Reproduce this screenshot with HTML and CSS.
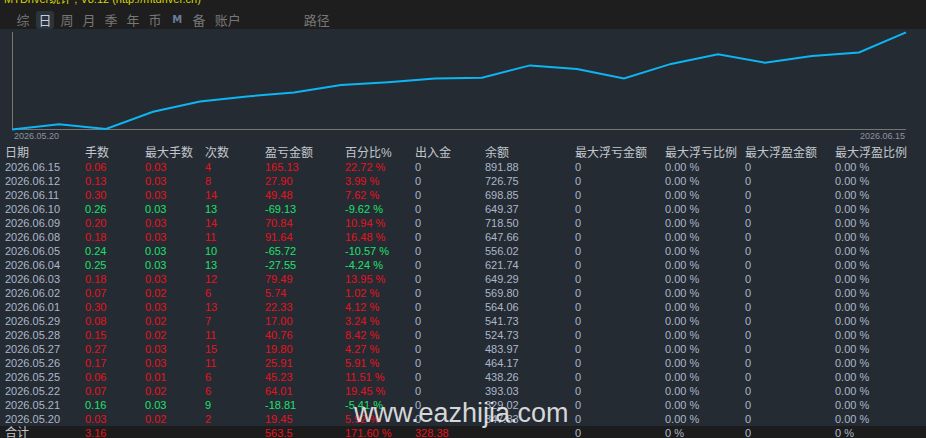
FILE: index.html
```html
<!DOCTYPE html>
<html lang="zh">

<head>
    <meta charset="UTF-8">
    <title>MTDriver统计</title>
    <link rel="stylesheet" href="styles.css">
</head>

<body>
    <header class="top">
        <div class="title"><span>MTDriver统计 , V8.12 (http://mtdriver.cn)</span></div>
        <nav class="tabs">
            <span class="tab">综</span>
            <span class="tab valgt">日</span>
            <span class="tab">周</span>
            <span class="tab">月</span>
            <span class="tab">季</span>
            <span class="tab">年</span>
            <span class="tab">币</span>
            <span class="tab logo">M</span>
            <span class="tab">备</span>
            <span class="tab">账户</span>
            <span class="tab path">路径</span>
        </nav>
    </header>

    <section class="chart">
        <svg width="926" height="117" viewBox="0 0 926 117">
            <line class="axis" x1="12.5" y1="3" x2="12.5" y2="100.5" />
            <line class="axis" x1="12" y1="100.5" x2="906" y2="100.5" />
            <polyline class="curve" points="12,100.5 59,95.3 106,100 153,82.8 200,72.6 247,67.4 294,63.6 341,56.1 388,53.3 435,49.6 482,48.7 530,36.4 577,40.1 624,49.5 671,34.9 718,25.2 765,33.7 812,27 859,23.4 906,3.3" />
            <text class="datum" x="14" y="110">2026.05.20</text>
            <text class="datum" x="905" y="110" text-anchor="end">2026.06.15</text>
        </svg>
    </section>

    <main class="tabel">
        <div class="row head">
            <span>日期</span><span>手数</span><span>最大手数</span><span>次数</span><span>盈亏金额</span><span>百分比%</span><span>出入金</span><span>余额</span><span>最大浮亏金额</span><span>最大浮亏比例</span><span>最大浮盈金额</span><span>最大浮盈比例</span>
        </div>
        <div class="row up">
            <span>2026.06.15</span><b>0.06</b><b>0.03</b><b>4</b><b>165.13</b><b>22.72 %</b><span>0</span><span>891.88</span><span>0</span><span>0.00 %</span><span>0</span><span>0.00 %</span>
        </div>
        <div class="row up">
            <span>2026.06.12</span><b>0.13</b><b>0.03</b><b>8</b><b>27.90</b><b>3.99 %</b><span>0</span><span>726.75</span><span>0</span><span>0.00 %</span><span>0</span><span>0.00 %</span>
        </div>
        <div class="row up">
            <span>2026.06.11</span><b>0.30</b><b>0.03</b><b>14</b><b>49.48</b><b>7.62 %</b><span>0</span><span>698.85</span><span>0</span><span>0.00 %</span><span>0</span><span>0.00 %</span>
        </div>
        <div class="row down">
            <span>2026.06.10</span><b>0.26</b><b>0.03</b><b>13</b><b>-69.13</b><b>-9.62 %</b><span>0</span><span>649.37</span><span>0</span><span>0.00 %</span><span>0</span><span>0.00 %</span>
        </div>
        <div class="row up">
            <span>2026.06.09</span><b>0.20</b><b>0.03</b><b>14</b><b>70.84</b><b>10.94 %</b><span>0</span><span>718.50</span><span>0</span><span>0.00 %</span><span>0</span><span>0.00 %</span>
        </div>
        <div class="row up">
            <span>2026.06.08</span><b>0.18</b><b>0.03</b><b>11</b><b>91.64</b><b>16.48 %</b><span>0</span><span>647.66</span><span>0</span><span>0.00 %</span><span>0</span><span>0.00 %</span>
        </div>
        <div class="row down">
            <span>2026.06.05</span><b>0.24</b><b>0.03</b><b>10</b><b>-65.72</b><b>-10.57 %</b><span>0</span><span>556.02</span><span>0</span><span>0.00 %</span><span>0</span><span>0.00 %</span>
        </div>
        <div class="row down">
            <span>2026.06.04</span><b>0.25</b><b>0.03</b><b>13</b><b>-27.55</b><b>-4.24 %</b><span>0</span><span>621.74</span><span>0</span><span>0.00 %</span><span>0</span><span>0.00 %</span>
        </div>
        <div class="row up">
            <span>2026.06.03</span><b>0.18</b><b>0.03</b><b>12</b><b>79.49</b><b>13.95 %</b><span>0</span><span>649.29</span><span>0</span><span>0.00 %</span><span>0</span><span>0.00 %</span>
        </div>
        <div class="row up">
            <span>2026.06.02</span><b>0.07</b><b>0.02</b><b>6</b><b>5.74</b><b>1.02 %</b><span>0</span><span>569.80</span><span>0</span><span>0.00 %</span><span>0</span><span>0.00 %</span>
        </div>
        <div class="row up">
            <span>2026.06.01</span><b>0.30</b><b>0.03</b><b>13</b><b>22.33</b><b>4.12 %</b><span>0</span><span>564.06</span><span>0</span><span>0.00 %</span><span>0</span><span>0.00 %</span>
        </div>
        <div class="row up">
            <span>2026.05.29</span><b>0.08</b><b>0.02</b><b>7</b><b>17.00</b><b>3.24 %</b><span>0</span><span>541.73</span><span>0</span><span>0.00 %</span><span>0</span><span>0.00 %</span>
        </div>
        <div class="row up">
            <span>2026.05.28</span><b>0.15</b><b>0.02</b><b>11</b><b>40.76</b><b>8.42 %</b><span>0</span><span>524.73</span><span>0</span><span>0.00 %</span><span>0</span><span>0.00 %</span>
        </div>
        <div class="row up">
            <span>2026.05.27</span><b>0.27</b><b>0.03</b><b>15</b><b>19.80</b><b>4.27 %</b><span>0</span><span>483.97</span><span>0</span><span>0.00 %</span><span>0</span><span>0.00 %</span>
        </div>
        <div class="row up">
            <span>2026.05.26</span><b>0.17</b><b>0.03</b><b>11</b><b>25.91</b><b>5.91 %</b><span>0</span><span>464.17</span><span>0</span><span>0.00 %</span><span>0</span><span>0.00 %</span>
        </div>
        <div class="row up">
            <span>2026.05.25</span><b>0.06</b><b>0.01</b><b>6</b><b>45.23</b><b>11.51 %</b><span>0</span><span>438.26</span><span>0</span><span>0.00 %</span><span>0</span><span>0.00 %</span>
        </div>
        <div class="row up">
            <span>2026.05.22</span><b>0.07</b><b>0.02</b><b>6</b><b>64.01</b><b>19.45 %</b><span>0</span><span>393.03</span><span>0</span><span>0.00 %</span><span>0</span><span>0.00 %</span>
        </div>
        <div class="row down">
            <span>2026.05.21</span><b>0.16</b><b>0.03</b><b>9</b><b>-18.81</b><b>-5.41 %</b><span>0</span><span>329.02</span><span>0</span><span>0.00 %</span><span>0</span><span>0.00 %</span>
        </div>
        <div class="row up">
            <span>2026.05.20</span><b>0.03</b><b>0.02</b><b>2</b><b>19.45</b><b>5.92 %</b><span>0</span><span>347.83</span><span>0</span><span>0.00 %</span><span>0</span><span>0.00 %</span>
        </div>
        <div class="row total up">
            <span class="sum">合计</span><b>3.16</b><span></span><span></span><b>563.5</b><b>171.60 %</b><b>328.38</b><span></span><span>0</span><span>0 %</span><span>0</span><span>0 %</span>
        </div>
    </main>

    <div class="mark">www.eazhijia.com</div>
</body></html>
```

FILE: styles.css
```css
* {
    box-sizing: border-box;
    padding: 0;
    margin: 0;
}

body {
    position: relative;
    width: 926px;
    height: 438px;
    overflow: hidden;
    background: #252b33;
    font-family: "Liberation Sans", Arial, "Noto Sans CJK SC", sans-serif;
}

.top {
    height: 29px;
    background: #1e1e1e;
}

.title {
    height: 7px;
    overflow: hidden;
    padding-left: 4px;
}

.title span {
    display: block;
    margin-top: -7px;
    font-size: 11px;
    line-height: 12px;
    color: #d6d600;
}

.tabs {
    display: flex;
    align-items: flex-end;
    height: 22px;
    padding-left: 12px;
    font-family: "Noto Sans CJK SC", sans-serif;
    font-size: 13px;
    color: #777777;
}

.tab {
    height: 18px;
    line-height: 18px;
    margin: 0 2px;
    padding: 0 2.5px;
    border-radius: 3px;
}

.valgt {
    background: #2b333d;
    color: #c6ced8;
}

.logo {
    width: 18px;
    text-align: center;
    font-family: "DejaVu Sans", sans-serif;
    font-size: 10px;
    font-weight: bold;
    color: #6a7c9c;
}

.path {
    margin-left: 56px;
}

.chart svg {
    display: block;
}

.axis {
    stroke: #757575;
    stroke-width: 1;
    shape-rendering: crispEdges;
}

.curve {
    fill: none;
    stroke: #0cb6f2;
    stroke-width: 2;
}

.datum {
    font-family: "Liberation Sans", Arial, sans-serif;
    font-size: 9px;
    fill: #8b949f;
}

.row {
    display: grid;
    grid-template-columns: 80px 60px 60px 60px 80px 70px 70px 90px 90px 80px 90px auto;
    height: 14px;
    padding-left: 5px;
    line-height: 14px;
    font-size: 11px;
    color: #abb7ca;
    white-space: nowrap;
}

.row b {
    font-weight: normal;
}

.up b {
    color: #e8121c;
}

.down b {
    color: #1fe06c;
}

.head {
    font-size: 12px;
    color: #c3c7cd;
}

.total {
    background: #1c1c1c;
}

.sum {
    font-size: 12px;
    color: #c3c7cd;
}

.mark {
    position: absolute;
    left: 354px;
    top: 400px;
    font-family: "Liberation Sans", Arial, sans-serif;
    font-size: 27px;
    line-height: 27px;
    color: rgba(255, 255, 255, 0.82);
}
```
